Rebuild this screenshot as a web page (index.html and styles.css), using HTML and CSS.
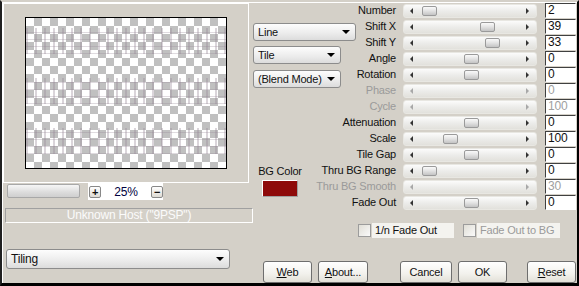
FILE: index.html
```html
<!DOCTYPE html>
<html lang="en">
<head>
  <meta charset="UTF-8" />
  <title>Tiling</title>
  <link rel="stylesheet" href="styles.css">
</head>
<body>

  <div class="dialog">
    <div class="left">
      <div class="preview-group">
        <div class="preview">
          <div class="ghost"></div>
          <div class="ghost"></div>
          <div class="ghost"></div>
        </div>
      </div>

      <div class="zoom-row">
        <div class="zoom-track"></div>
        <div class="zoom-box">
          <span class="zbtn">+</span>
          <span class="zoom-val">25%</span>
          <span class="zbtn">&minus;</span>
        </div>
      </div>

      <div class="host">Unknown Host ("9PSP")</div>

      <div class="select select-tiling"><span>Tiling</span><i class="caret"></i></div>
    </div>

    <div class="right">
      <div class="params">
        <div class="middle">
          <div class="select select-line"><span>Line</span><i class="caret"></i></div>
          <div class="select select-tile"><span>Tile</span><i class="caret"></i></div>
          <div class="select select-blend"><span>(Blend Mode)</span><i class="caret"></i></div>
          <div class="bg-color">
            <span>BG Color</span>
            <div class="swatch"></div>
          </div>
        </div>

        <div class="rows">
          <div class="row">
            <div class="label">Number</div>
            <div class="slider"><i class="arr-l"></i><b class="thumb" style="left: 18px"></b><i class="arr-r"></i></div>
            <div class="value">2</div>
          </div>
          <div class="row">
            <div class="label">Shift X</div>
            <div class="slider"><i class="arr-l"></i><b class="thumb" style="left: 76px"></b><i class="arr-r"></i></div>
            <div class="value">39</div>
          </div>
          <div class="row">
            <div class="label">Shift Y</div>
            <div class="slider"><i class="arr-l"></i><b class="thumb" style="left: 81px"></b><i class="arr-r"></i></div>
            <div class="value">33</div>
          </div>
          <div class="row">
            <div class="label">Angle</div>
            <div class="slider"><i class="arr-l"></i><b class="thumb" style="left: 60px"></b><i class="arr-r"></i></div>
            <div class="value">0</div>
          </div>
          <div class="row">
            <div class="label">Rotation</div>
            <div class="slider"><i class="arr-l"></i><b class="thumb" style="left: 60px"></b><i class="arr-r"></i></div>
            <div class="value">0</div>
          </div>
          <div class="row off">
            <div class="label">Phase</div>
            <div class="slider"><i class="arr-l"></i><i class="arr-r"></i></div>
            <div class="value">0</div>
          </div>
          <div class="row off">
            <div class="label">Cycle</div>
            <div class="slider"><i class="arr-l"></i><i class="arr-r"></i></div>
            <div class="value">100</div>
          </div>
          <div class="row">
            <div class="label">Attenuation</div>
            <div class="slider"><i class="arr-l"></i><b class="thumb" style="left: 60px"></b><i class="arr-r"></i></div>
            <div class="value">0</div>
          </div>
          <div class="row">
            <div class="label">Scale</div>
            <div class="slider"><i class="arr-l"></i><b class="thumb" style="left: 39px"></b><i class="arr-r"></i></div>
            <div class="value">100</div>
          </div>
          <div class="row">
            <div class="label">Tile Gap</div>
            <div class="slider"><i class="arr-l"></i><b class="thumb" style="left: 60px"></b><i class="arr-r"></i></div>
            <div class="value">0</div>
          </div>
          <div class="row">
            <div class="label">Thru BG Range</div>
            <div class="slider"><i class="arr-l"></i><b class="thumb" style="left: 18px"></b><i class="arr-r"></i></div>
            <div class="value">0</div>
          </div>
          <div class="row off">
            <div class="label">Thru BG Smooth</div>
            <div class="slider"><i class="arr-l"></i><i class="arr-r"></i></div>
            <div class="value">30</div>
          </div>
          <div class="row">
            <div class="label">Fade Out</div>
            <div class="slider"><i class="arr-l"></i><b class="thumb" style="left: 60px"></b><i class="arr-r"></i></div>
            <div class="value">0</div>
          </div>
        </div>
      </div>

      <div class="checks">
        <div class="check"><span class="box"></span><span class="check-label">1/n Fade Out</span></div>
        <div class="check off"><span class="box"></span><span class="check-label">Fade Out to BG</span></div>
      </div>

      <div class="buttons">
        <div class="btn btn-web"><u>W</u>eb</div>
        <div class="btn btn-about"><u>A</u>bout...</div>
        <div class="btn btn-cancel">Cancel</div>
        <div class="btn btn-ok">OK</div>
        <div class="btn btn-reset"><u>R</u>eset</div>
      </div>
    </div>
  </div>

</body>
</html>
```

FILE: styles.css
```css
* {
  box-sizing: border-box;
}

body {
  margin: 0;
  background: #d4d0c8;
  font-family: 'Liberation Sans', Arial, sans-serif;
  font-size: 11px;
  letter-spacing: -0.2px;
  color: #111;
}

.dialog {
  width: 579px;
  height: 286px;
  display: flex;
  background: #d4d0c8;
  border-top: 2px solid #d4d0c8;
  border-left: 2px solid #202020;
  border-right: 2px solid #000;
  border-bottom: 3px solid #000;
  box-shadow: inset 1px 1px 0 #fff;
  padding: 1px 0 0 1px;
}

/* Colonne gauche : apercu */
.left {
  width: 250px;
  display: flex;
  flex-direction: column;
}

.preview-group {
  width: 246px;
  height: 180px;
  border: 1px solid #fff;
  display: flex;
  align-items: center;
  justify-content: center;
}

.preview {
  width: 202px;
  height: 152px;
  border: 1px solid #000;
  background-color: #fff;
  background-image:
    linear-gradient(45deg, #c0c0c0 25%, transparent 25%, transparent 75%, #c0c0c0 75%),
    linear-gradient(45deg, #c0c0c0 25%, transparent 25%, transparent 75%, #c0c0c0 75%);
  background-size: 16px 16px;
  background-position: 0 0, 8px 8px;
  display: flex;
  flex-direction: column;
  gap: 24px;
  padding-top: 10px;
}

.ghost {
  height: 26px;
  background-image:
    repeating-linear-gradient(90deg, rgba(150, 135, 150, 0.35) 0 2px, transparent 2px 9px),
    repeating-linear-gradient(0deg, rgba(150, 135, 150, 0.3) 0 1px, transparent 1px 7px);
}

.zoom-row {
  height: 16px;
  display: flex;
  align-items: flex-start;
}

.zoom-track {
  width: 73px;
  height: 14px;
  margin: 1px 0 0 4px;
  border: 1px solid #a8a8a8;
  border-radius: 2px;
  background: linear-gradient(#f6f6f6, #dcdcdc 60%, #cfcfcf);
}

.zoom-box {
  width: 75px;
  height: 17px;
  margin-left: 8px;
  background: #fff;
  display: flex;
  align-items: center;
  padding: 0 0 0 1px;
}

.zbtn {
  width: 12px;
  height: 12px;
  border: 1px solid #888;
  border-radius: 2px;
  background: linear-gradient(#fff, #dedbd4);
  font-size: 11px;
  font-weight: bold;
  line-height: 10px;
  text-align: center;
}

.zoom-val {
  flex: 1;
  text-align: center;
  font-size: 12px;
  color: #000040;
}

.host {
  width: 248px;
  height: 15px;
  margin: 9px 0 0 2px;
  border: 1px solid #a0a0a0;
  border-right-color: #fff;
  border-bottom-color: #fff;
  color: #fbfbfb;
  text-align: center;
  font-size: 12px;
  line-height: 13px;
}

/* Listes deroulantes */
.select {
  height: 18px;
  border: 1px solid #8c8c8c;
  border-radius: 3px;
  background: linear-gradient(#fdfdfd, #ebebeb 60%, #dcdcdc);
  display: flex;
  align-items: center;
  justify-content: space-between;
  padding: 0 5px 0 4px;
  white-space: nowrap;
}

.caret {
  width: 0;
  height: 0;
  border-left: 4px solid transparent;
  border-right: 4px solid transparent;
  border-top: 4px solid #000;
}

.select-tiling {
  width: 224px;
  height: 20px;
  margin: 26px 0 0 3px;
  font-size: 12px;
}

.select-line {
  width: 103px;
  margin-top: 20px;
}

.select-tile {
  width: 88px;
  margin-top: 5px;
}

.select-blend {
  width: 88px;
  margin-top: 6px;
}

/* Colonne droite : parametres */
.right {
  flex: 1;
  display: flex;
  flex-direction: column;
}

.params {
  display: grid;
  grid-template-columns: 105px 1fr;
  grid-template-rows: 208px;
}

.middle {
  grid-area: 1 / 1 / 2 / 2;
  display: flex;
  flex-direction: column;
}

.rows {
  grid-area: 1 / 1 / 2 / 3;
  display: flex;
  flex-direction: column;
}

.row {
  height: 16px;
  display: grid;
  grid-template-columns: 148px 136px 39px;
}

.bg-color {
  width: 40px;
  margin: 77px 0 0 7px;
  display: flex;
  flex-direction: column;
  align-items: center;
  white-space: nowrap;
}

.swatch {
  width: 36px;
  height: 17px;
  margin-top: 3px;
  background: #8e0a0a;
  border: 1px solid #fff;
  border-right-color: #a0a0a0;
  border-bottom-color: #a0a0a0;
}

.label {
  justify-self: end;
  padding-right: 5px;
  line-height: 15px;
  white-space: nowrap;
}

.row.off .label {
  color: #9a9a9a;
}

.slider {
  position: relative;
  height: 14px;
  margin: 1px 0 0 2px;
  border-radius: 3px;
  background: linear-gradient(#fbfbfb, #ececea 50%, #e2e1dc);
  border: 1px solid #e8e7e2;
}

.arr-l,
.arr-r {
  position: absolute;
  top: 3px;
  width: 0;
  height: 0;
  border-top: 3px solid transparent;
  border-bottom: 3px solid transparent;
}

.arr-l {
  left: 6px;
  border-right: 3px solid #333;
}

.arr-r {
  right: 7px;
  border-left: 3px solid #333;
}

.row.off .arr-l {
  border-right-color: #a8a8a8;
}

.row.off .arr-r {
  border-left-color: #a8a8a8;
}

.thumb {
  position: absolute;
  top: 1px;
  width: 15px;
  height: 10px;
  border: 1px solid #9a9a9a;
  border-radius: 2px;
  background: linear-gradient(#fafafa, #e2e2e2 50%, #c4c4c4);
}

.value {
  height: 15px;
  margin-left: 8px;
  width: 31px;
  background: #fff;
  border: 1px solid #404040;
  border-right-color: #fff;
  border-bottom-color: #fff;
  padding-left: 2px;
  font-size: 12px;
  line-height: 13px;
}

.row.off .value {
  color: #a0a0a0;
}

/* Cases a cocher */
.checks {
  display: flex;
  align-items: center;
  margin-top: 12px;
  padding-left: 105px;
  height: 15px;
}

.check {
  display: flex;
  align-items: center;
}

.check + .check {
  margin-left: 9px;
}

.box {
  width: 13px;
  height: 13px;
  border: 1px solid #9c9c9c;
  background: linear-gradient(135deg, #e0ded6, #fafafa);
}

.check-label {
  width: 82px;
  margin-left: 1px;
  padding-left: 3px;
  background: #f4f3ef;
  line-height: 15px;
}

.check.off .check-label {
  width: 83px;
  color: #9a9a9a;
}

/* Boutons */
.buttons {
  display: flex;
  margin-top: 23px;
  padding-left: 10px;
}

.btn {
  width: 49px;
  height: 22px;
  border: 1px solid #6e6e6e;
  border-radius: 3px;
  background: linear-gradient(#ffffff, #f2f1ec 60%, #e2e0d8);
  line-height: 20px;
  text-align: center;
}

.btn-about {
  width: 50px;
  margin-left: 6px;
}

.btn-cancel {
  width: 52px;
  margin-left: 32px;
}

.btn-ok {
  margin-left: 6px;
}

.btn-reset {
  margin-left: 20px;
}
```
